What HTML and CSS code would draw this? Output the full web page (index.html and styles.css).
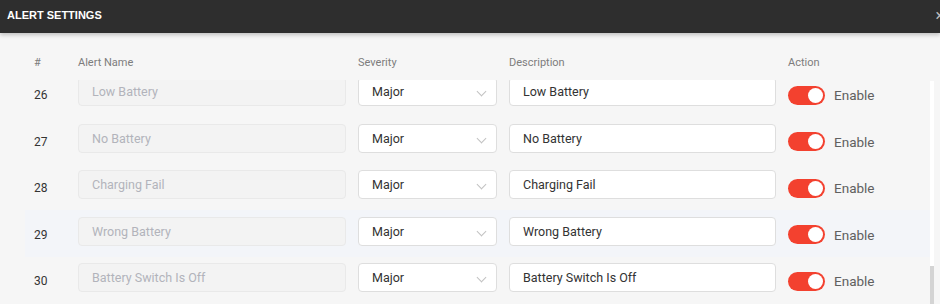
FILE: index.html
```html
<!DOCTYPE html>
<html>
<head>
    <title>Alert Settings</title>
    <meta name="viewport" content="width=device-width, initial-scale=1.0">
    <link rel="stylesheet" href="styles.css">
</head>
<body>
    <div class="topbar">
        <span class="title">ALERT SETTINGS</span>
        <span class="close">&times;</span>
    </div>

    <div class="colHead grid">
        <span>#</span>
        <span>Alert Name</span>
        <span>Severity</span>
        <span>Description</span>
        <span>Action</span>
    </div>

    <div class="scrollArea">
        <div class="rows">
            <div class="row grid">
                <span class="num">26</span>
                <div class="field disabled">Low Battery</div>
                <div class="field select">Major<span class="chev"></span></div>
                <div class="field">Low Battery</div>
                <div class="action"><span class="toggle"></span>Enable</div>
            </div>
            <div class="row grid">
                <span class="num">27</span>
                <div class="field disabled">No Battery</div>
                <div class="field select">Major<span class="chev"></span></div>
                <div class="field">No Battery</div>
                <div class="action"><span class="toggle"></span>Enable</div>
            </div>
            <div class="row grid">
                <span class="num">28</span>
                <div class="field disabled">Charging Fail</div>
                <div class="field select">Major<span class="chev"></span></div>
                <div class="field">Charging Fail</div>
                <div class="action"><span class="toggle"></span>Enable</div>
            </div>
            <div class="row grid hover">
                <span class="num">29</span>
                <div class="field disabled">Wrong Battery</div>
                <div class="field select">Major<span class="chev"></span></div>
                <div class="field">Wrong Battery</div>
                <div class="action"><span class="toggle"></span>Enable</div>
            </div>
            <div class="row grid">
                <span class="num">30</span>
                <div class="field disabled">Battery Switch Is Off</div>
                <div class="field select">Major<span class="chev"></span></div>
                <div class="field">Battery Switch Is Off</div>
                <div class="action"><span class="toggle"></span>Enable</div>
            </div>
        </div>
        <div class="scrollbar">
            <div class="thumb"></div>
        </div>
    </div>
</body>
</html>
```

FILE: styles.css
```css
*{
    margin:0;
    padding:0;
    box-sizing:border-box;
}

body{
    width:940px;
    height:304px;
    overflow:hidden;
    background-color:#f6f6f6;
    font-family:Roboto, "Liberation Sans", sans-serif;
    color:#333;
}

.topbar{
    position:relative;
    z-index:2;
    height:33px;
    background-color:#2e2e2e;
    display:flex;
    align-items:center;
    justify-content:space-between;
    padding-left:7px;
    box-shadow:0 2px 4px rgba(0,0,0,0.22);
}

.title{
    color:white;
    font-family:"Liberation Sans", Arial, sans-serif;
    font-weight:bold;
    font-size:11px;
    margin-top:-3px;
}

.close{
    color:#bbb;
    font-size:16px;
    margin-right:-4px;
    margin-top:-3px;
}

.grid{
    display:grid;
    grid-template-columns:32px 268px 139px 267px 1fr;
    column-gap:12px;
}

.colHead{
    height:47px;
    padding:23px 0 0 34px;
    font-size:11px;
    color:#7d7d7d;
}

.scrollArea{
    display:flex;
    height:224px;
    overflow:hidden;
}

.rows{
    flex:1;
    margin-top:-9.5px;
}

.row{
    height:46.5px;
    padding:6.5px 0 0 9px;
    margin-left:25px;
}

.hover{
    background-color:#f3f5f9;
}

.num{
    font-size:12px;
    color:#333;
    height:29px;
    display:flex;
    align-items:center;
    margin-top:3.5px;
}

.field{
    height:29px;
    border:1px solid #dedede;
    border-radius:4px;
    background-color:white;
    display:flex;
    align-items:center;
    padding-left:13px;
    font-size:12.5px;
    color:#333;
}

.disabled{
    background-color:#f3f3f3;
    border-color:#e9e9e9;
    color:#b2b3bb;
}

.select{
    position:relative;
}

.chev{
    position:absolute;
    right:11px;
    top:10px;
    width:7px;
    height:7px;
    border-right:1px solid #c2c2c2;
    border-bottom:1px solid #c2c2c2;
    transform:rotate(45deg);
}

.action{
    height:29px;
    margin-top:3.5px;
    display:flex;
    align-items:center;
    font-size:13.5px;
    color:#606060;
}

.toggle{
    position:relative;
    width:37px;
    height:19px;
    border-radius:10px;
    background-color:#f3412f;
    margin-right:9px;
}

.toggle::after{
    content:"";
    position:absolute;
    right:2px;
    top:2px;
    width:15px;
    height:15px;
    border-radius:50%;
    background-color:white;
}

.scrollbar{
    width:4px;
    margin:1px 6px 0 0;
    background-color:white;
    display:flex;
    flex-direction:column;
    justify-content:flex-end;
}

.thumb{
    height:38px;
    background-color:#d4d4d4;
}
```
